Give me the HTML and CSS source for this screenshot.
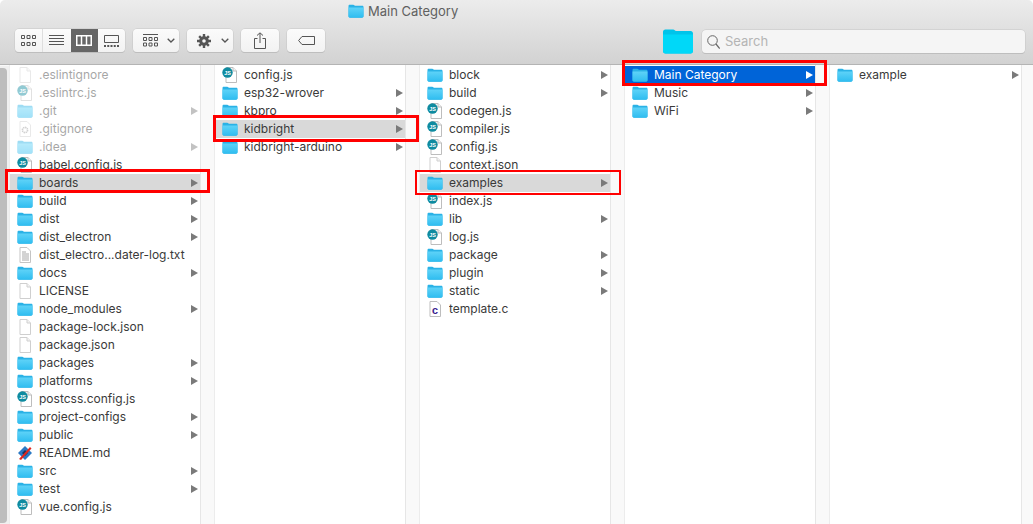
FILE: index.html
```html
<!DOCTYPE html>
<html lang="en">
<head>
<meta charset="utf-8">
<title>Main Category</title>
<link rel="stylesheet" href="styles.css">
</head>
<body>
<svg class="defs" width="0" height="0" aria-hidden="true">
  <defs>
    <linearGradient id="fg" x1="0" y1="0" x2="0" y2="1"><stop offset="0" stop-color="#5fd3f8"/><stop offset="1" stop-color="#2fbdf0"/></linearGradient>
    <symbol id="folder" viewBox="0 0 16 14">
      <path d="M.5 2.2C.5 1.3 1 .8 1.9.8h3.4c.8 0 1 .9 1.8.9h7c1 0 1.4.5 1.4 1.4v9.2c0 .9-.5 1.4-1.4 1.4H1.9c-.9 0-1.4-.5-1.4-1.4z" fill="#2ab2e6"/>
      <path d="M.5 3.4h15v8.7c0 .9-.5 1.4-1.4 1.4H1.9c-.9 0-1.4-.5-1.4-1.4z" fill="url(#fg)"/>
    </symbol>
    <symbol id="doc" viewBox="0 0 16 16">
      <path d="M3 .5h7l3.5 3.5v11.5H3z" fill="#fff" stroke="#cfcfcf"/>
      <path d="M10 .5V4h3.5" fill="#f3f3f3" stroke="#cfcfcf"/>
    </symbol>
    <symbol id="js" viewBox="0 0 16 16">
      <path d="M4 .5h7l3.5 3.500v11.500H4z" fill="#fff" stroke="#bdbdbd"/>
      <path d="M11 .5V4h3.500" fill="#f3f3f3" stroke="#bdbdbd"/>
      <circle cx="5.500" cy="5.500" r="5.200" fill="#0f8ba0"/>
      <text x="5.500" y="7.600" class="js-t">JS</text>
    </symbol>
    <symbol id="txt" viewBox="0 0 16 16">
      <path d="M3 .5h7l3.500 3.500v11.500H3z" fill="#fff" stroke="#c4c4c4"/>
      <path d="M5 5h4M5 7h7M5 9h7M5 11h7M5 13h7" stroke="#a8a8a8"/>
    </symbol>
    <symbol id="gear" viewBox="0 0 16 16">
      <path d="M3 .5h7l3.500 3.500v11.500H3z" fill="#fff" stroke="#cfcfcf"/>
      <circle cx="8" cy="9" r="2.600" fill="none" stroke="#9a9a9a" stroke-width="1.600" stroke-dasharray="1.400 .6"/>
    </symbol>
    <symbol id="cfile" viewBox="0 0 16 16">
      <path d="M3 .5h7l3.500 3.500v11.500H3z" fill="#fff" stroke="#bdbdbd"/>
      <text x="8" y="13" class="c-t">c</text>
    </symbol>
    <symbol id="md" viewBox="0 0 16 16">
      <path d="M8 1l7 7-7 7-7-7z" fill="#2a79c4"/>
      <path d="M8 5l3 3-3 3-3-3z" fill="#123a66"/>
      <path d="M2 14L13 2l1.500 1.500L4 15z" fill="#e0281e"/>
    </symbol>
    <symbol id="arrow" viewBox="0 0 7 8"><path d="M0 0l7 4-7 4z"/></symbol>
  </defs>
</svg>

<div class="window">
  <header class="toolbar">
    <div class="title">
      <svg class="ic-title"><use href="#folder"/></svg>
      <span>Main Category</span>
    </div>
    <div class="tools">
      <div class="btn seg">
        <span class="seg-item first">
          <svg width="15" height="13" viewBox="0 0 15 13" class="glyph"><path d="M.5 1.500h3v3h-3zM6 1.500h3v3H6zM11.500 1.500h3v3h-3zM.5 8.500h3v3h-3zM6 8.500h3v3H6zM11.500 8.500h3v3h-3z" fill="none" stroke="#555"/></svg>
        </span>
        <span class="seg-item">
          <svg width="15" height="11" viewBox="0 0 15 11" class="glyph"><path d="M0 .5h15M0 3.500h15M0 6.500h15M0 9.500h15" stroke="#555"/></svg>
        </span>
        <span class="seg-item on">
          <svg width="16" height="11" viewBox="0 0 16 11" class="glyph"><path d="M.75.75h14.500v9.500H.75zM5.500.75v9.500M10.500.75v9.500" fill="none" stroke="#fff" stroke-width="1.500"/></svg>
        </span>
        <span class="seg-item">
          <svg width="15" height="12" viewBox="0 0 15 12" class="glyph"><path d="M.5.5h14v7H.5z" fill="none" stroke="#555"/><path d="M0 11h2M3.250 11h2M6.500 11h2M9.750 11h2M13 11h2" stroke="#555" stroke-width="2"/></svg>
        </span>
      </div>
      <div class="btn b-view">
        <svg width="15" height="13" viewBox="0 0 15 13" class="glyph"><path d="M0 .5h15M.5 3.500h3v3h-3zM6 3.500h3v3H6zM11.500 3.500h3v3h-3zM.5 9h3v3h-3zM6 9h3v3H6zM11.500 9h3v3h-3z" fill="none" stroke="#555"/></svg>
        <svg width="8" height="5" viewBox="0 0 8 5" class="chev"><path d="M.7.7L4 4l3.300-3.300" fill="none" stroke="#555" stroke-width="1.300"/></svg>
      </div>
      <div class="btn b-action">
        <svg width="14" height="14" viewBox="0 0 14 14" class="glyph"><path d="M7 2.200a4.800 4.800 0 1 0 0 9.600 4.800 4.800 0 0 0 0-9.600zm0 3a1.800 1.800 0 1 1 0 3.600 1.800 1.800 0 0 1 0-3.600z" fill="#555"/><path d="M5.800 0h2.400v3H5.800zM5.800 11h2.400v3H5.800zM0 5.800h3v2.400H0zM11 5.800h3v2.400h-3zM1.300 3l1.700-1.700L5 3.300 3.300 5zM9 10.700l1.700-1.700 2 2L11 12.700zM1.300 11l2-2L5 10.700l-2 2zM9 3.300l2-2L12.700 3l-2 2z" fill="#555"/></svg>
        <svg width="8" height="5" viewBox="0 0 8 5" class="chev"><path d="M.7.7L4 4l3.300-3.300" fill="none" stroke="#555" stroke-width="1.300"/></svg>
      </div>
      <div class="btn b-share">
        <svg width="12" height="17" viewBox="0 0 12 17" class="glyph"><path d="M3.500 6.500H.5v10h11v-10h-3M6 11V1M3 3.500L6 .8l3 2.700" fill="none" stroke="#555"/></svg>
      </div>
      <div class="btn b-tag">
        <svg width="17" height="9" viewBox="0 0 17 9" class="glyph"><path d="M4 .5h12.500v8H4L.6 4.500z" fill="none" stroke="#555"/></svg>
      </div>
      <div class="tools-right">
        <svg class="ic-big" viewBox="0 0 30 25"><path d="M0 3C0 1.500.9.500 2.400.500h7.800c1.300 0 1.700 1.500 3 1.500h14.400C29 2 30 3 30 4.500V22c0 1.600-1 2.500-2.400 2.500H2.400C.9 24.500 0 23.600 0 22z" fill="#00c4ea"/><path d="M0 5.500h30V22c0 1.600-1 2.500-2.400 2.500H2.400C.9 24.500 0 23.600 0 22z" fill="#00d8f8"/></svg>
        <div class="search">
          <svg width="13" height="14" viewBox="0 0 13 14"><circle cx="5.500" cy="5.500" r="4.800" fill="none" stroke="#666"/><path d="M9 9l3.700 4.500" stroke="#666" stroke-width="1.200"/></svg>
          <span>Search</span>
        </div>
      </div>
    </div>
  </header>

  <main class="browser">
    <div class="scrollbar"><div class="thumb"></div></div>

    <section class="col">
      <div class="row dim"><svg class="ic"><use href="#doc"/></svg><span class="name">.eslintignore</span></div>
      <div class="row dim"><svg class="ic"><use href="#js"/></svg><span class="name">.eslintrc.js</span></div>
      <div class="row dim"><svg class="ic"><use href="#folder"/></svg><span class="name">.git</span><svg class="arr"><use href="#arrow"/></svg></div>
      <div class="row dim"><svg class="ic"><use href="#gear"/></svg><span class="name">.gitignore</span></div>
      <div class="row dim"><svg class="ic"><use href="#folder"/></svg><span class="name">.idea</span><svg class="arr"><use href="#arrow"/></svg></div>
      <div class="row"><svg class="ic"><use href="#js"/></svg><span class="name">babel.config.js</span></div>
      <div class="row sel"><svg class="ic"><use href="#folder"/></svg><span class="name">boards</span><svg class="arr"><use href="#arrow"/></svg></div>
      <div class="row"><svg class="ic"><use href="#folder"/></svg><span class="name">build</span><svg class="arr"><use href="#arrow"/></svg></div>
      <div class="row"><svg class="ic"><use href="#folder"/></svg><span class="name">dist</span><svg class="arr"><use href="#arrow"/></svg></div>
      <div class="row"><svg class="ic"><use href="#folder"/></svg><span class="name">dist_electron</span><svg class="arr"><use href="#arrow"/></svg></div>
      <div class="row"><svg class="ic"><use href="#txt"/></svg><span class="name">dist_electro...dater-log.txt</span></div>
      <div class="row"><svg class="ic"><use href="#folder"/></svg><span class="name">docs</span><svg class="arr"><use href="#arrow"/></svg></div>
      <div class="row"><svg class="ic"><use href="#doc"/></svg><span class="name">LICENSE</span></div>
      <div class="row"><svg class="ic"><use href="#folder"/></svg><span class="name">node_modules</span><svg class="arr"><use href="#arrow"/></svg></div>
      <div class="row"><svg class="ic"><use href="#doc"/></svg><span class="name">package-lock.json</span></div>
      <div class="row"><svg class="ic"><use href="#doc"/></svg><span class="name">package.json</span></div>
      <div class="row"><svg class="ic"><use href="#folder"/></svg><span class="name">packages</span><svg class="arr"><use href="#arrow"/></svg></div>
      <div class="row"><svg class="ic"><use href="#folder"/></svg><span class="name">platforms</span><svg class="arr"><use href="#arrow"/></svg></div>
      <div class="row"><svg class="ic"><use href="#js"/></svg><span class="name">postcss.config.js</span></div>
      <div class="row"><svg class="ic"><use href="#folder"/></svg><span class="name">project-configs</span><svg class="arr"><use href="#arrow"/></svg></div>
      <div class="row"><svg class="ic"><use href="#folder"/></svg><span class="name">public</span><svg class="arr"><use href="#arrow"/></svg></div>
      <div class="row"><svg class="ic"><use href="#md"/></svg><span class="name">README.md</span></div>
      <div class="row"><svg class="ic"><use href="#folder"/></svg><span class="name">src</span><svg class="arr"><use href="#arrow"/></svg></div>
      <div class="row"><svg class="ic"><use href="#folder"/></svg><span class="name">test</span><svg class="arr"><use href="#arrow"/></svg></div>
      <div class="row"><svg class="ic"><use href="#js"/></svg><span class="name">vue.config.js</span></div>
    </section>

    <section class="col">
      <div class="row"><svg class="ic"><use href="#js"/></svg><span class="name">config.js</span></div>
      <div class="row"><svg class="ic"><use href="#folder"/></svg><span class="name">esp32-wrover</span><svg class="arr"><use href="#arrow"/></svg></div>
      <div class="row"><svg class="ic"><use href="#folder"/></svg><span class="name">kbpro</span><svg class="arr"><use href="#arrow"/></svg></div>
      <div class="row sel"><svg class="ic"><use href="#folder"/></svg><span class="name">kidbright</span><svg class="arr"><use href="#arrow"/></svg></div>
      <div class="row"><svg class="ic"><use href="#folder"/></svg><span class="name">kidbright-arduino</span><svg class="arr"><use href="#arrow"/></svg></div>
    </section>

    <section class="col">
      <div class="row"><svg class="ic"><use href="#folder"/></svg><span class="name">block</span><svg class="arr"><use href="#arrow"/></svg></div>
      <div class="row"><svg class="ic"><use href="#folder"/></svg><span class="name">build</span><svg class="arr"><use href="#arrow"/></svg></div>
      <div class="row"><svg class="ic"><use href="#js"/></svg><span class="name">codegen.js</span></div>
      <div class="row"><svg class="ic"><use href="#js"/></svg><span class="name">compiler.js</span></div>
      <div class="row"><svg class="ic"><use href="#js"/></svg><span class="name">config.js</span></div>
      <div class="row"><svg class="ic"><use href="#doc"/></svg><span class="name">context.json</span></div>
      <div class="row sel"><svg class="ic"><use href="#folder"/></svg><span class="name">examples</span><svg class="arr"><use href="#arrow"/></svg></div>
      <div class="row"><svg class="ic"><use href="#js"/></svg><span class="name">index.js</span></div>
      <div class="row"><svg class="ic"><use href="#folder"/></svg><span class="name">lib</span><svg class="arr"><use href="#arrow"/></svg></div>
      <div class="row"><svg class="ic"><use href="#js"/></svg><span class="name">log.js</span></div>
      <div class="row"><svg class="ic"><use href="#folder"/></svg><span class="name">package</span><svg class="arr"><use href="#arrow"/></svg></div>
      <div class="row"><svg class="ic"><use href="#folder"/></svg><span class="name">plugin</span><svg class="arr"><use href="#arrow"/></svg></div>
      <div class="row"><svg class="ic"><use href="#folder"/></svg><span class="name">static</span><svg class="arr"><use href="#arrow"/></svg></div>
      <div class="row"><svg class="ic"><use href="#cfile"/></svg><span class="name">template.c</span></div>
    </section>

    <section class="col">
      <div class="row active"><svg class="ic"><use href="#folder"/></svg><span class="name">Main Category</span><svg class="arr"><use href="#arrow"/></svg></div>
      <div class="row"><svg class="ic"><use href="#folder"/></svg><span class="name">Music</span><svg class="arr"><use href="#arrow"/></svg></div>
      <div class="row"><svg class="ic"><use href="#folder"/></svg><span class="name">WiFi</span><svg class="arr"><use href="#arrow"/></svg></div>
    </section>

    <section class="col last">
      <div class="row"><svg class="ic"><use href="#folder"/></svg><span class="name">example</span><svg class="arr"><use href="#arrow"/></svg></div>
    </section>

    <div class="mark m1"></div>
    <div class="mark m2"></div>
    <div class="mark m3"></div>
    <div class="mark m4"></div>
  </main>
</div>
</body>
</html>
```

FILE: styles.css
```css
* { box-sizing: border-box; }
html, body { margin: 0; height: 100%; background: #fff; overflow: hidden; }
body { font-family: Inter, "Liberation Sans", sans-serif; font-size: 12px; color: #3a3a3a; }
.defs { position: absolute; }
.js-t { font: 700 5.5px "Liberation Sans", sans-serif; fill: #fff; text-anchor: middle; }
.c-t { font: 700 11px "Liberation Mono", monospace; fill: #3b1d8f; text-anchor: middle; }

.window { width: 1033px; height: 524px; display: flex; flex-direction: column; }

.toolbar {
  height: 65px; flex: none;
  padding: 0 8px 0 15px;
  border-bottom: 1px solid #b4b4b4;
  border-top-left-radius: 5px; border-top-right-radius: 5px;
  background: linear-gradient(#ececec, #d2d2d2);
  display: flex; flex-direction: column;
}
.title { height: 29px; flex: none; padding: 2px 0 9px 333px; display: flex; align-items: center; gap: 4px; font-size: 13px; color: #606060; }
.ic-title { width: 16px; height: 14px; }

.tools { display: flex; align-items: flex-start; gap: 8px; }
.btn {
  height: 23px; display: flex; align-items: center; justify-content: center;
  background: linear-gradient(#fbfbfb, #f2f2f2);
  border-radius: 4px;
  box-shadow: 0 0 0 .5px #c6c6c6, 0 1px 0 #b6b6b6;
}
.seg { width: 110px; overflow: hidden; }
.seg-item { flex: 1; height: 100%; display: flex; align-items: center; justify-content: center; border-left: 1px solid #dedede; }
.seg-item.first { border-left: 0; }
.seg-item.on { background: #666; border-left: 0; }
.seg-item.on + .seg-item { border-left: 0; }
.glyph { display: block; }
.b-view, .b-action { width: 46px; justify-content: flex-start; padding-left: 10px; }
.b-view { gap: 9px; }
.b-action { gap: 10px; }
.b-share, .b-tag { width: 38px; }
.chev { display: block; }

.tools-right { margin-left: auto; display: flex; align-items: flex-start; gap: 9px; }
.ic-big { width: 30px; height: 25px; display: block; }
.search {
  width: 323px; height: 23px; margin-top: 1px;
  display: flex; align-items: center; gap: 5px; padding-left: 5px;
  background: #f5f5f5; border-radius: 4px;
  box-shadow: 0 0 0 .5px #c6c6c6, 0 1px 0 #b6b6b6;
  color: #b4b4b4; font-size: 13px;
}
.search span { margin-bottom: 2px; }

.browser { position: relative; flex: 1; display: flex; min-height: 0; padding-top: 1px; background: #f9f9f9; }
.scrollbar { width: 10px; flex: none; background: #f0f0f0; padding: 2px 0; }
.thumb { width: 7px; height: 455px; background: #bdbdbd; border-radius: 0 4px 4px 0; }

.col {
  width: 191px; flex: none; margin-right: 14px;
  background: #fff;
  border-right: 1px solid #e6e6e6;
  box-shadow: -1px 0 0 #ececec;
  margin-top: -1px; padding-top: 1px;
  overflow: hidden;
}
.col.last { width: 192px; margin-right: 0; }

.row { height: 18px; display: flex; align-items: center; padding: 0 2px 0 7px; white-space: nowrap; }
.ic { width: 16px; height: 16px; flex: none; margin-right: 6px; }
.name { flex: 1; min-width: 0; overflow: hidden; line-height: 16px; }
.arr { width: 7px; height: 8px; flex: none; fill: #7a7a7a; }
.dim { opacity: .45; }
.sel { background: #d9d9d9; }
.active { background: #0064d8; color: #fff; }
.active .arr { fill: #fff; }

.mark { position: absolute; border: 3px solid #f00; pointer-events: none; }
.m1 { left: 5px; top: 104px; width: 205px; height: 24px; }
.m2 { left: 213px; top: 50px; width: 206px; height: 27px; }
.m3 { left: 415px; top: 105px; width: 206px; height: 25px; border-width: 2px; }
.m4 { left: 622px; top: -5px; width: 205px; height: 26px; }
```
